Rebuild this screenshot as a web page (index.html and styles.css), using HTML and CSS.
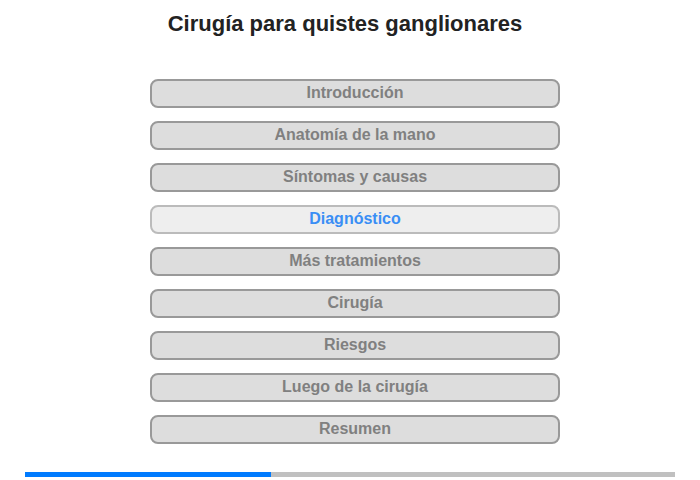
FILE: index.html
```html
<!DOCTYPE html>
<html>
<head>
  <meta charset="UTF-8">
  <title>Cirugía para quistes ganglionares</title>
  <link rel="stylesheet" href="styles.css">
</head>
<body>
<div class="page">
  <h1 class="title">Cirugía para quistes ganglionares</h1>
  <div class="menu">
    <div class="item">Introducción</div>
    <div class="item">Anatomía de la mano</div>
    <div class="item">Síntomas y causas</div>
    <div class="item on">Diagnóstico</div>
    <div class="item">Más tratamientos</div>
    <div class="item">Cirugía</div>
    <div class="item">Riesgos</div>
    <div class="item">Luego de la cirugía</div>
    <div class="item">Resumen</div>
  </div>
  <div class="progress"><div class="bar" style="width:37.8%;"></div></div>
</div>
</body>
</html>
```

FILE: styles.css
```css
*{margin:0;padding:0;box-sizing:border-box;}
body{font-family:"Liberation Sans",Arial,sans-serif;background:#fff;}
.page{width:700px;height:480px;display:flex;flex-direction:column;align-items:center;}
.title{font-size:22px;font-weight:bold;color:#222;line-height:26px;margin-top:11px;margin-right:10px;}
.menu{margin-top:42px;margin-left:10px;display:flex;flex-direction:column;gap:13px;}
.item{width:410px;height:29px;border:2px solid #999;border-radius:8px;background:#ddd;color:#808080;font-size:16px;font-weight:bold;text-align:center;line-height:24px;}
.item.on{background:#eee;border-color:#bbb;color:#3a8ef5;}
.progress{margin-top:auto;margin-bottom:3px;width:650px;height:5px;background:#c0c0c0;}
.bar{height:5px;background:#007bff;}
```
